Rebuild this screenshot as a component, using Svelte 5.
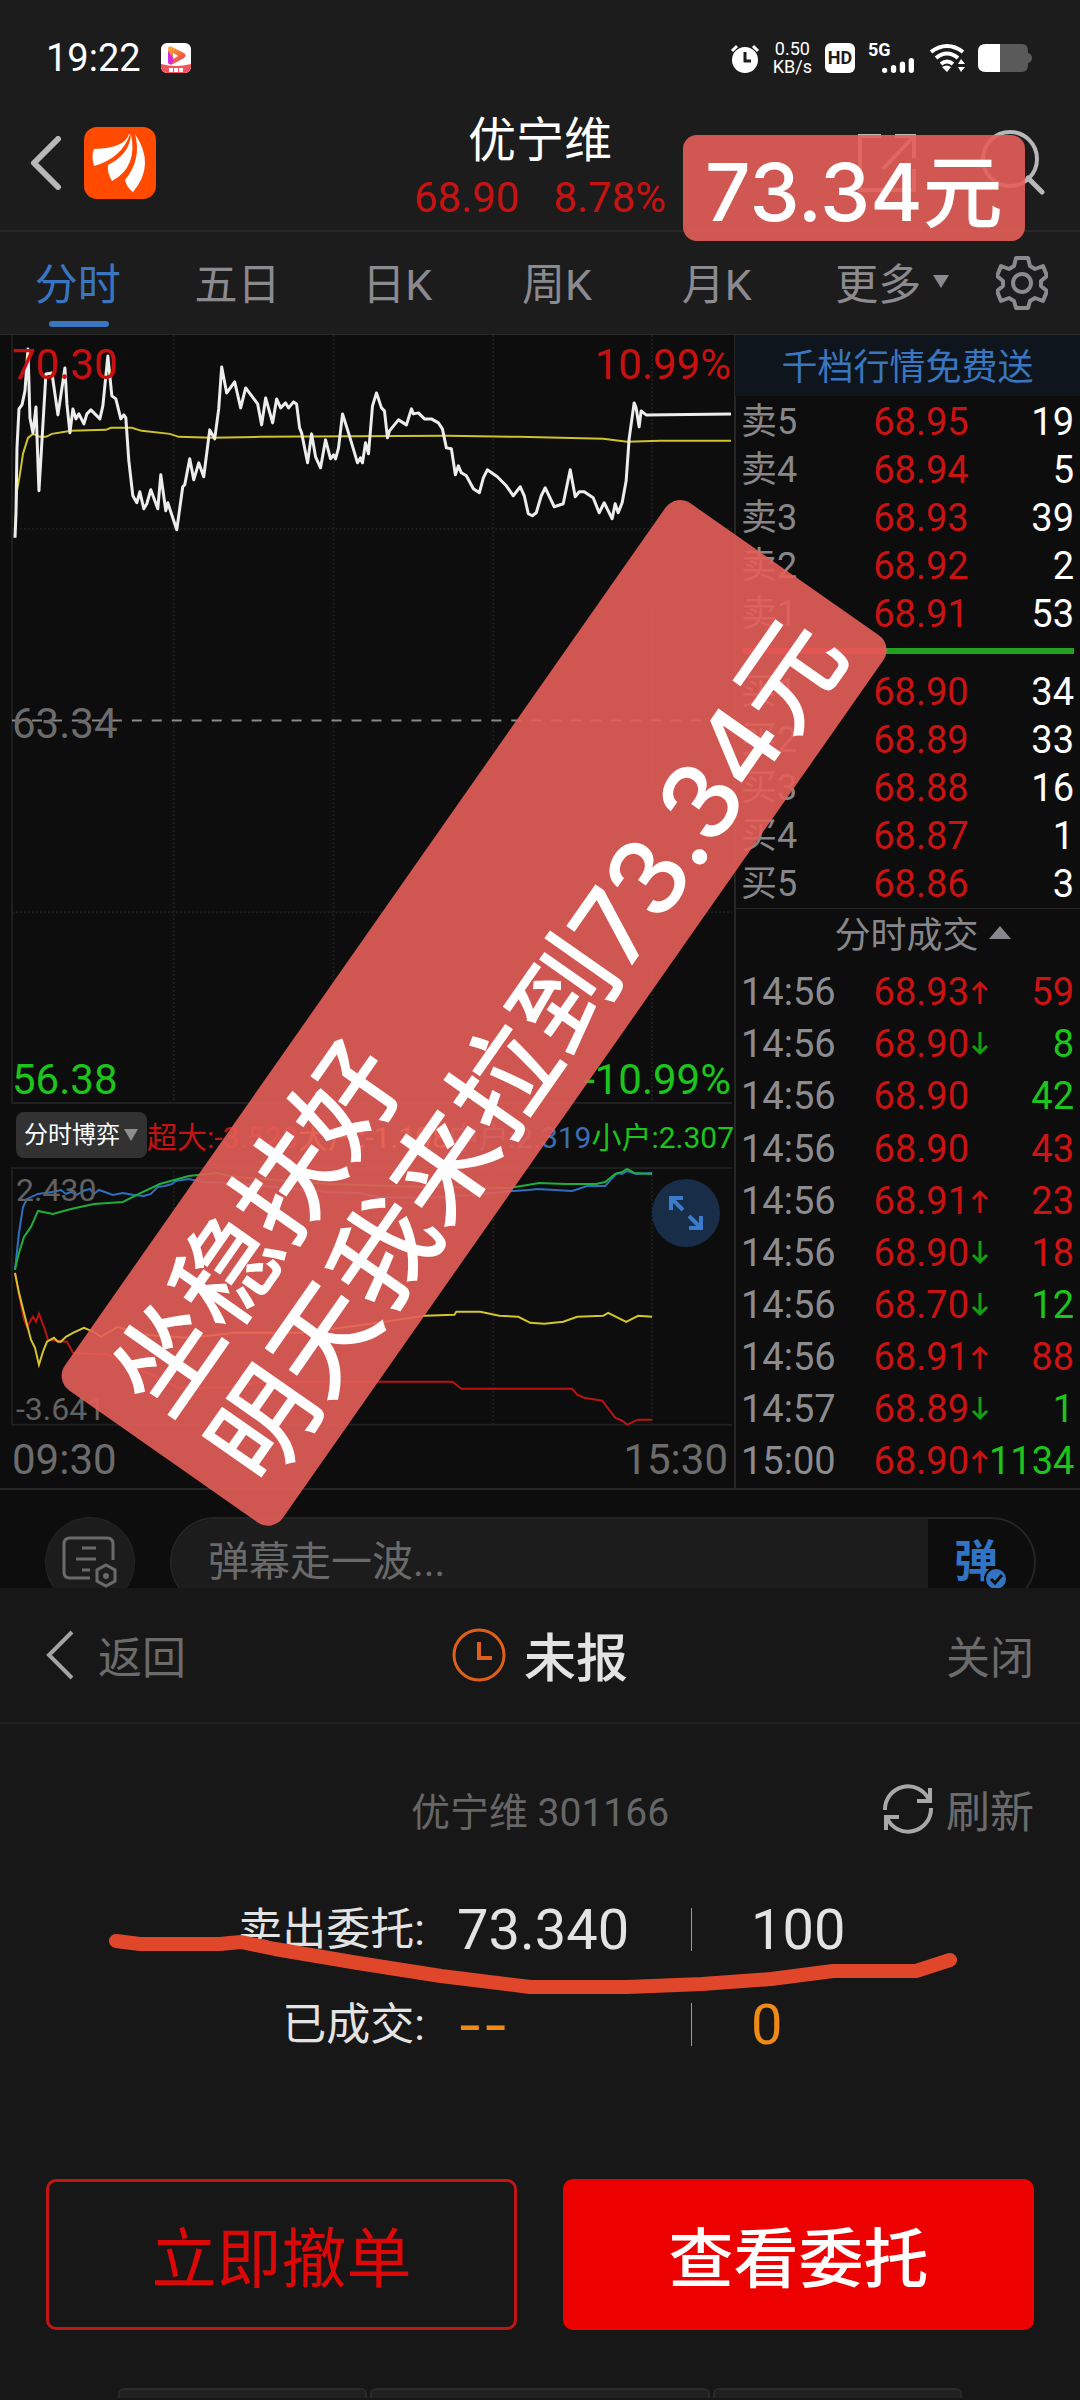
<script>
	let note = "";
	let period = "分时";
	let indicator = "分时博弈";

	const periods = ["分时", "五日", "日K", "周K", "月K"];

	const sells = [
		{ label: "卖5", price: "68.95", qty: 19 },
		{ label: "卖4", price: "68.94", qty: 5 },
		{ label: "卖3", price: "68.93", qty: 39 },
		{ label: "卖2", price: "68.92", qty: 2 },
		{ label: "卖1", price: "68.91", qty: 53 },
	];

	const buys = [
		{ label: "买1", price: "68.90", qty: 34 },
		{ label: "买2", price: "68.89", qty: 33 },
		{ label: "买3", price: "68.88", qty: 16 },
		{ label: "买4", price: "68.87", qty: 1 },
		{ label: "买5", price: "68.86", qty: 3 },
	];

	const trades = [
		{ time: "14:56", price: "68.93", dir: "up", qty: 59, side: "buy" },
		{ time: "14:56", price: "68.90", dir: "down", qty: 8, side: "sell" },
		{ time: "14:56", price: "68.90", dir: "", qty: 42, side: "sell" },
		{ time: "14:56", price: "68.90", dir: "", qty: 43, side: "buy" },
		{ time: "14:56", price: "68.91", dir: "up", qty: 23, side: "buy" },
		{ time: "14:56", price: "68.90", dir: "down", qty: 18, side: "buy" },
		{ time: "14:56", price: "68.70", dir: "down", qty: 12, side: "sell" },
		{ time: "14:56", price: "68.91", dir: "up", qty: 88, side: "buy" },
		{ time: "14:57", price: "68.89", dir: "down", qty: 1, side: "sell" },
		{ time: "15:00", price: "68.90", dir: "up", qty: 1134, side: "sell" },
	];

	const priceLine =
		"15,203 16,179 17,113 19,74 22,70 25,56 28,14 30,83 33,98 36,72 39,156 42,106 46,39 52,38 58,80 65,33 67,69 70,98 73,74 76,84 79,79 84,89 87,79 91,75 100,84 103,71 108,21 112,61 116,64 121,84 124,80 126,83 129,126 133,161 137,168 140,157 144,174 147,169 151,155 158,174 161,140 166,176 168,168 173,183 177,195 183,152 185,150 190,124 194,145 199,128 204,142 210,95 215,104 219,74 222,32 227,58 235,47 241,73 246,53 252,61 258,69 262,90 266,63 273,88 277,64 281,73 286,68 289,73 294,67 297,69 300,93 302,98 308,128 312,99 316,122 321,133 326,105 331,124 334,120 336,124 339,113 343,79 349,98 358,128 361,123 363,128 366,108 369,119 373,71 377,58 382,73 385,76 388,103 390,96 399,85 407,90 412,74 414,79 419,78 425,84 432,84 439,88 443,94 447,113 452,114 456,140 459,131 462,138 467,141 474,154 480,158 484,143 488,135 498,142 507,151 514,161 521,152 525,161 529,179 533,181 537,178 542,161 546,153 555,172 564,169 571,135 576,162 580,157 585,157 594,163 600,178 605,168 613,184 616,169 619,178 623,168 627,146 630,104 635,68 637,73 640,92 642,76 647,80 732,79";
	const averageLine =
		"15,196 17,156 20,139 23,119 28,103 33,99 40,102 46,102 52,99 71,96 106,95 111,93 132,93 142,96 170,99 179,102 212,103 260,102 448,101 519,102 604,104 628,107 661,106 732,106";

	const flows = [
		{
			color: "#2f6fc0",
			points: "15,103 19,66 23,40 27,32 38,27 52,25 61,23 66,27 71,25 77,28 83,24 90,22 94,27 99,23 105,25 113,28 123,26 134,28 144,29 151,27 158,20 165,19 172,17 176,14 189,12 203,15 227,16 330,25 359,26 378,30 425,31 472,28 514,24 529,23 538,22 573,24 588,19 606,19 613,11 618,6 623,7 628,4 637,7 653,6",
		},
		{
			color: "#1fae3c",
			points: "15,103 19,86 24,70 31,60 38,44 53,47 71,42 94,37 123,35 137,28 160,17 189,9 217,6 236,10 330,17 425,20 510,21 540,16 566,17 597,17 606,15 616,7 623,5 628,2 635,6 653,7",
		},
		{
			color: "#b81414",
			points: "15,106 19,128 24,153 27,160 33,150 36,155 39,147 45,163 48,173 67,175 73,186 109,188 179,221 227,221 264,215 453,215 462,222 573,222 578,228 585,231 603,234 616,251 623,254 628,258 639,253 653,253",
		},
		{
			color: "#d2c62c",
			points: "15,106 19,126 25,150 31,173 35,181 39,198 43,185 47,175 54,171 58,175 61,175 66,170 73,166 84,161 94,165 101,170 118,160 142,168 189,171 236,166 302,166 349,160 378,156 425,149 455,148 457,145 481,145 500,149 519,150 531,156 545,157 564,155 578,150 604,149 609,146 627,155 639,149 653,150",
		},
	];
</script>

<div class="app">
	<header>
		<div class="status">
			<span class="clock">19:22</span>
			<svg class="app-badge" viewBox="0 0 30 30" width="30" height="30">
				<defs>
					<linearGradient id="play" x1="0" y1="0" x2="1" y2="1">
						<stop offset="0" stop-color="#f9b233" />
						<stop offset="1" stop-color="#e8324f" />
					</linearGradient>
				</defs>
				<rect width="30" height="30" rx="6" fill="#fff" />
				<path d="M0 21q15 4 30 0v3a6 6 0 0 1-6 6H6a6 6 0 0 1-6-6z" fill="#f0545c" />
				<path d="M7 6q0-4 4-2l12 6q3 2 0 5l-11 6q-5 2-5-3z" fill="url(#play)" />
				<path d="M7 8l6 8-2 5q-4 1-4-3z" fill="#d42be0" />
				<path d="M12 10l5 3-5 3z" fill="#fff" />
				<path d="M8 27h14" stroke="#fff" stroke-width="4" stroke-dasharray="4 1" />
			</svg>
			<div class="status-icons">
				<svg viewBox="0 0 30 30" width="30" height="30">
					<circle cx="15" cy="17" r="13" fill="#fff" />
					<path d="M2 8l5-5M28 8l-5-5" stroke="#fff" stroke-width="3" />
					<path d="M15 9v9h6" fill="none" stroke="#1c1c1c" stroke-width="3" />
				</svg>
				<span class="speed">0.50<br />KB/s</span>
				<span class="hd">HD</span>
				<span class="cell">
					<span>5G</span>
					<svg viewBox="0 0 36 18" width="36" height="18">
						<path d="M3 15v0M13 15v-3M23 15v-7M33 15V4" stroke="#fff" stroke-width="6" stroke-linecap="round" />
					</svg>
				</span>
				<svg viewBox="0 0 36 30" width="36" height="30">
					<g fill="none" stroke="#fff" stroke-width="4">
						<path d="M2 9q16-12 32 0" />
						<path d="M7 15q11-9 22 0" />
						<path d="M12 21q6-5 12 0" />
					</g>
					<path d="M13 24q5-3 9 0l-4 5z" fill="#fff" />
					<path d="M32 16l4 5h-7zM32 29l4-5h-7z" fill="#fff" />
				</svg>
				<svg viewBox="0 0 54 28" width="54" height="28">
					<path d="M8 0h36q6 0 6 7v2q4 1 4 5t-4 5v2q0 7-6 7H8q-8 0-8-7V7q0-7 8-7z" fill="#5a5a5a" />
					<path d="M22 0v28H8q-8 0-8-7V7q0-7 8-7z" fill="#fff" />
				</svg>
			</div>
		</div>
		<div class="title-bar">
			<div class="side">
				<button class="icon" aria-label="返回">
					<svg viewBox="0 0 32 54" width="32" height="54">
						<path d="M28 3L4 27l24 24" fill="none" stroke="#b8b8b8" stroke-width="6" stroke-linecap="round" stroke-linejoin="round" />
					</svg>
				</button>
				<svg viewBox="0 0 72 72" width="72" height="72">
					<rect width="72" height="72" rx="13" fill="#ff4a00" />
					<path d="M45 7q-4 14-35 15-3 7 0 17 28-8 36-32z" fill="#fff" />
					<path d="M47 7q-1 20-23 31-1 8 4 16 26-14 19-47z" fill="#fff" />
					<path d="M51 7q7 25-10 46 2 8 8 12 23-27 2-58z" fill="#fff" />
				</svg>
			</div>
			<div class="stock">
				<h1>优宁维</h1>
				<p><span>68.90</span><span>8.78%</span></p>
			</div>
			<div class="side right">
				<button class="icon" aria-label="分享">
					<svg viewBox="0 0 60 60" width="60" height="60">
						<path d="M24 3H3v54h54V36M38 3h19v22M57 3L26 36" fill="none" stroke="#b8b8b8" stroke-width="4" />
					</svg>
				</button>
				<button class="icon" aria-label="搜索">
					<svg viewBox="0 0 64 66" width="64" height="66">
						<circle cx="29" cy="29" r="27" fill="none" stroke="#b8b8b8" stroke-width="4" />
						<path d="M47 48l14 14" stroke="#b8b8b8" stroke-width="5" stroke-linecap="round" />
					</svg>
				</button>
			</div>
			<div class="sticker small">73.34元</div>
		</div>
		<nav>
			{#each periods as item}
				<button class:active={period === item} on:click={() => (period = item)}>{item}</button>
			{/each}
			<button class="more">
				更多
				<svg viewBox="0 0 16 13" width="16" height="13"><path d="M0 0h16L8 13z" fill="currentColor" /></svg>
			</button>
			<button class="gear" aria-label="设置">
				<svg viewBox="0 0 52 54" width="52" height="54">
					<path
						d="M20 2h12l2 8 5 3 8-3 4 10-6 5v5l6 5-4 10-8-3-5 3-2 7H20l-2-7-5-3-8 3-4-10 6-5v-5l-6-5 4-10 8 3 5-3z"
						fill="none"
						stroke="currentColor"
						stroke-width="4"
						stroke-linejoin="round"
					/>
					<circle cx="26" cy="27" r="9" fill="none" stroke="currentColor" stroke-width="4" />
				</svg>
			</button>
		</nav>
	</header>

	<main>
		<section class="charts">
			<div class="chart">
				<svg viewBox="0 0 735 770">
					<g stroke="#1f1f1f" stroke-width="2">
						<path d="M12 0V769H733" fill="none" />
						<path d="M174 0V768M334 0V768M494 0V768M653 0V768M12 194H733M12 578H733" stroke-dasharray="2 2" />
					</g>
					<path d="M12 386H733" stroke="#8a8a8a" stroke-width="2" stroke-dasharray="10 10" />
					<polyline points={averageLine} fill="none" stroke="#cfc32b" stroke-width="2" />
					<polyline points={priceLine} fill="none" stroke="#ededed" stroke-width="3" stroke-linejoin="round" />
				</svg>
				<span class="axis up tl">70.30</span>
				<span class="axis up tr">10.99%</span>
				<span class="axis mid">63.34</span>
				<span class="axis down bl">56.38</span>
				<span class="axis down br">-10.99%</span>
			</div>
			<div class="legend">
				<div class="picker">
					<select bind:value={indicator} aria-label="指标">
						<option>分时博弈</option>
					</select>
					<svg viewBox="0 0 14 12" width="14" height="12"><path d="M0 0h14L7 12z" fill="#8e8d92" /></svg>
				</div>
				<p>
					<span class="huge">超大:-3.528</span><span class="large">大户:-1.108</span><span class="medium"
						>中户:2.319</span
					><span class="little">小户:2.307</span>
				</p>
			</div>
			<div class="chart">
				<svg viewBox="0 0 735 259">
					<g stroke="#1f1f1f" stroke-width="2">
						<path d="M12 258V1H733M12 258H733" fill="none" />
						<path d="M174 0V258M334 0V258M494 0V258M653 0V258" stroke-dasharray="2 2" />
					</g>
					{#each flows as flow}
						<polyline points={flow.points} fill="none" stroke={flow.color} stroke-width="2" />
					{/each}
				</svg>
				<span class="scale top">2.430</span>
				<span class="scale bottom">-3.641</span>
				<button class="expand" aria-label="放大">
					<svg viewBox="0 0 34 34" width="34" height="34">
						<path d="M14 2H2v12M2 2l12 12M20 32h12V20M32 32L20 20" fill="none" stroke="#3a7ccb" stroke-width="4" />
					</svg>
				</button>
			</div>
			<div class="times"><span>09:30</span><span>15:30</span></div>
		</section>

		<section class="book">
			<a class="promo" href="#depth">千档行情免费送</a>
			<table>
				<tbody>
					{#each sells as row}
						<tr>
							<th scope="row">{row.label}</th>
							<td class="price">{row.price}</td>
							<td class="qty">{row.qty}</td>
						</tr>
					{/each}
				</tbody>
			</table>
			<div class="ratio"></div>
			<table>
				<tbody>
					{#each buys as row}
						<tr>
							<th scope="row">{row.label}</th>
							<td class="price">{row.price}</td>
							<td class="qty">{row.qty}</td>
						</tr>
					{/each}
				</tbody>
			</table>
			<button class="ticks">
				分时成交
				<svg viewBox="0 0 22 13" width="22" height="13"><path d="M0 13h22L11 0z" fill="currentColor" /></svg>
			</button>
			<ul>
				{#each trades as trade}
					<li>
						<span class="time">{trade.time}</span>
						<span class="price">{trade.price}</span>
						<span class="arrow">
							{#if trade.dir === "up"}
								<svg viewBox="0 0 18 24" width="18" height="24">
									<path d="M9 24V3M2 10l7-7 7 7" fill="none" stroke="#cc1111" stroke-width="3" />
								</svg>
							{:else if trade.dir === "down"}
								<svg viewBox="0 0 18 24" width="18" height="24">
									<path d="M9 0v21M2 14l7 7 7-7" fill="none" stroke="#12a012" stroke-width="3" />
								</svg>
							{/if}
						</span>
						<span class="qty {trade.side}">{trade.qty}</span>
					</li>
				{/each}
			</ul>
		</section>

		<div class="sticker big">坐稳扶好<br />明天我来拉到73.34元</div>
	</main>

	<div class="barrage">
		<button class="round" aria-label="弹幕设置">
			<svg viewBox="0 0 56 52" width="56" height="52">
				<g fill="none" stroke="#6a6a6a" stroke-width="3">
					<path d="M28 42H8q-6 0-6-6V8q0-6 6-6h37q6 0 6 6v16" />
					<path d="M20 12h14M14 23h20M20 34h8" />
					<path d="M44 29l9 5v11l-9 5-9-5V34z" />
				</g>
				<circle cx="44" cy="40" r="3" fill="#6a6a6a" />
			</svg>
		</button>
		<div class="pill">
			<input type="text" placeholder="弹幕走一波..." aria-label="弹幕" bind:value={note} />
			<button class="send" aria-label="弹幕开关">
				<span>弹</span>
				<svg viewBox="0 0 24 24" width="24" height="24">
					<circle cx="12" cy="12" r="11" fill="#3274c4" stroke="#0d0d0d" stroke-width="2" />
					<path d="M7 12l4 4 7-8" fill="none" stroke="#0d0d0d" stroke-width="3" />
				</svg>
			</button>
		</div>
	</div>

	<section class="sheet">
		<div class="sheet-head">
			<button class="link">
				<svg viewBox="0 0 28 50" width="28" height="50">
					<path d="M26 2L3 25l23 23" fill="none" stroke="#a3a3a3" stroke-width="4" />
				</svg>
				返回
			</button>
			<h2>
				<svg viewBox="0 0 54 54" width="54" height="54">
					<circle cx="27" cy="27" r="25" fill="none" stroke="#dd5f1a" stroke-width="3" />
					<path d="M27 14v16h13" fill="none" stroke="#dd5f1a" stroke-width="4" />
				</svg>
				未报
			</h2>
			<button class="link end">关闭</button>
		</div>
		<div class="name-row">
			<span class="code">优宁维 301166</span>
			<button class="link end">
				<svg viewBox="0 0 52 52" width="52" height="52">
					<g fill="none" stroke="#a8a8a8" stroke-width="4">
						<path d="M3 27A23 23 0 0 1 47 17M49 25A23 23 0 0 1 5 35" />
						<path d="M48 5v13H35M4 47V34h13" />
					</g>
				</svg>
				刷新
			</button>
		</div>
		<dl>
			<div>
				<dt>卖出委托:</dt>
				<dd class="amount">73.340</dd>
				<dd class="count">100</dd>
			</div>
			<div class="filled">
				<dt>已成交:</dt>
				<dd class="amount none">--</dd>
				<dd class="count">0</dd>
			</div>
			<svg class="scribble" viewBox="0 0 1080 200">
				<path
					d="M116 58L140 61H220L241 59L275 66L358 80L441 93L530 104H627L702 101L771 96L833 88H916L950 77"
					fill="none"
					stroke="#e0472a"
					stroke-width="14"
					stroke-linecap="round"
					stroke-linejoin="round"
				/>
			</svg>
		</dl>
		<div class="actions">
			<button class="cancel">立即撤单</button>
			<button class="view">查看委托</button>
		</div>
		<div class="dock"><i></i><i></i><i></i></div>
	</section>
</div>

<style>
	:global(body) {
		background: #171717;
	}
	.app {
		font-family: Roboto, "Noto Sans CJK SC", sans-serif;
		background: #0d0d0d;
		color: #fff;
		overflow: hidden;
	}
	button,
	input,
	select {
		font: inherit;
		color: inherit;
		background: none;
		border: 0;
		padding: 0;
		margin: 0;
	}
	button {
		cursor: pointer;
	}
	svg {
		display: block;
	}
	h1,
	h2,
	p,
	dl,
	dd,
	ul {
		margin: 0;
		padding: 0;
		font-weight: 400;
	}
	header {
		background: #1c1c1c;
	}
	.status {
		display: flex;
		align-items: center;
		height: 116px;
		padding: 0 48px 0 46px;
	}
	.clock {
		font-size: 38px;
		margin-right: 20px;
	}
	.status-icons {
		display: flex;
		align-items: center;
		gap: 13px;
		margin-left: auto;
	}
	.speed {
		font-size: 18px;
		line-height: 18px;
		text-align: center;
	}
	.hd {
		width: 30px;
		background: #fff;
		color: #1c1c1c;
		border-radius: 6px;
		font-size: 18px;
		line-height: 30px;
		font-weight: 700;
		text-align: center;
	}
	.cell {
		display: flex;
		flex-direction: column;
		width: 48px;
		height: 30px;
	}
	.cell span {
		font-size: 18px;
		line-height: 14px;
		font-weight: 700;
	}
	.cell svg {
		align-self: flex-end;
	}
	.title-bar {
		display: grid;
		grid-template-columns: 1fr auto 1fr;
		grid-template-rows: 114px;
		align-items: center;
		padding: 0 35px 0 30px;
		position: relative;
		border-bottom: 2px solid #262626;
	}
	.side {
		display: flex;
		align-items: center;
		gap: 22px;
		margin-bottom: 20px;
	}
	.side.right {
		justify-content: flex-end;
		gap: 64px;
	}
	.stock {
		align-self: start;
		padding-left: 5px;
		text-align: center;
	}
	h1 {
		font-size: 48px;
		line-height: 50px;
	}
	.stock p {
		display: flex;
		gap: 34px;
		font-size: 42px;
		line-height: 64px;
		color: #c51313;
	}
	.sticker {
		position: absolute;
		background: rgba(229, 94, 89, 0.9);
		font-family: Inter, "Noto Sans CJK SC", sans-serif;
		font-weight: 500;
		white-space: nowrap;
		z-index: 2;
	}
	.sticker.small {
		left: 683px;
		top: 19px;
		padding: 8px 22px 0;
		border-radius: 14px;
		font-size: 80px;
		line-height: 98px;
	}
	.sticker.big {
		left: 474px;
		top: 678px;
		padding: 20px 31px 10px;
		border-radius: 18px;
		font-size: 105px;
		line-height: 118px;
		transform: translate(-50%, -50%) rotate(-55deg);
	}
	nav {
		display: flex;
		height: 102px;
		padding-right: 6px;
		border-bottom: 1px solid #2a2a2a;
		color: #8b8a8f;
		font-size: 43px;
	}
	nav button {
		flex: 3 1 0;
		position: relative;
		padding: 0 4px 4px 0;
	}
	nav .active {
		color: #3a76c0;
	}
	nav .active::after {
		content: "";
		position: absolute;
		left: 50%;
		bottom: 7px;
		width: 60px;
		height: 6px;
		margin-left: -31px;
		border-radius: 3px;
		background: currentColor;
	}
	nav .more {
		display: flex;
		align-items: center;
		justify-content: center;
		gap: 12px;
		padding: 0 0 4px 16px;
	}
	nav .gear {
		flex: 2 1 0;
		display: flex;
		align-items: center;
		justify-content: center;
		padding: 0;
	}
	main {
		display: grid;
		grid-template-columns: minmax(0, 49fr) minmax(0, 23fr);
		position: relative;
		border-bottom: 2px solid #262626;
	}
	.charts {
		border-right: 2px solid #262626;
		margin-right: -1px;
	}
	.chart {
		position: relative;
	}
	.chart > svg {
		width: 100%;
	}
	.axis,
	.times {
		font-size: 42px;
		line-height: 48px;
	}
	.axis {
		position: absolute;
		left: 12px;
	}
	.axis.tl,
	.axis.tr {
		top: 6px;
	}
	.axis.tr,
	.axis.br {
		left: auto;
		right: 3px;
	}
	.axis.bl,
	.axis.br {
		bottom: 0;
	}
	.axis.mid {
		top: 365px;
		color: #6c6c6c;
	}
	.up {
		color: #c91010;
	}
	.down {
		color: #1cc41c;
	}
	.legend {
		display: flex;
		align-items: center;
		justify-content: space-between;
		height: 63px;
		padding: 0 3px 0 16px;
		white-space: nowrap;
	}
	.picker {
		position: relative;
	}
	.picker select {
		appearance: none;
		width: 131px;
		height: 46px;
		padding-left: 8px;
		border-radius: 8px;
		background: #323232;
		font-size: 24px;
	}
	.picker svg {
		position: absolute;
		right: 9px;
		top: 17px;
		pointer-events: none;
	}
	.legend p {
		font-size: 30px;
	}
	.huge {
		color: #c51313;
	}
	.large {
		color: #e09a2c;
	}
	.medium {
		color: #3a6fb4;
	}
	.little {
		color: #1cc41c;
	}
	.scale {
		position: absolute;
		left: 16px;
		font-size: 32px;
		line-height: 40px;
		color: #626262;
	}
	.scale.top {
		top: 3px;
	}
	.scale.bottom {
		bottom: -3px;
	}
	.expand {
		position: absolute;
		right: 14px;
		top: 12px;
		width: 68px;
		height: 68px;
		border-radius: 50%;
		background: #182d48;
		display: flex;
		align-items: center;
		justify-content: center;
	}
	.times {
		display: flex;
		justify-content: space-between;
		padding: 10px 6px 4px 12px;
		color: #6c6c6c;
	}
	.book {
		display: flex;
		flex-direction: column;
		font-size: 38px;
		line-height: 48px;
	}
	.promo {
		background: #0f151c;
		color: #3a76c0;
		font-size: 36px;
		line-height: 56px;
		padding: 5px 0 0;
		margin-bottom: 2px;
		text-align: center;
		text-decoration: none;
	}
	table {
		border-collapse: collapse;
		table-layout: fixed;
		width: 100%;
	}
	th,
	td {
		padding: 0;
		height: 48px;
	}
	th {
		width: 30%;
		padding-left: 6px;
		font-size: 36px;
		font-weight: 400;
		text-align: left;
		color: #87878b;
	}
	td {
		text-align: right;
	}
	td.price {
		width: 36%;
	}
	.price {
		color: #c91212;
	}
	.qty {
		padding-right: 6px;
	}
	.ratio {
		height: 6px;
		margin: 10px 6px 14px 7px;
		background: linear-gradient(to right, #c91212 43%, #22a022 43%);
	}
	.ticks {
		display: flex;
		align-items: center;
		justify-content: center;
		gap: 10px;
		height: 54px;
		margin-bottom: 4px;
		padding-left: 30px;
		border-top: 1px solid #262626;
		font-size: 36px;
		color: #87878b;
	}
	.ticks svg {
		margin-bottom: 6px;
	}
	ul {
		flex: 1;
		display: flex;
		flex-direction: column;
		list-style: none;
	}
	li {
		flex: 1;
		display: grid;
		grid-template-columns: 104px 124px 20px minmax(0, 1fr);
		align-items: center;
		padding-left: 6px;
	}
	li .price,
	li .qty {
		text-align: right;
	}
	li .arrow {
		padding-left: 2px;
	}
	.time {
		color: #8b8b90;
	}
	.buy {
		color: #cf1313;
	}
	.sell {
		color: #1cc41c;
	}
	.barrage {
		display: flex;
		align-items: flex-start;
		gap: 35px;
		height: 71px;
		padding: 27px 44px 0 45px;
		overflow: hidden;
	}
	.round {
		flex: none;
		width: 90px;
		height: 90px;
		border-radius: 50%;
		border: 1px solid #262626;
		background: #1c1c1c;
		display: flex;
		align-items: center;
		justify-content: center;
	}
	.pill {
		flex: 1;
		display: flex;
		height: 90px;
		border: 2px solid #242424;
		border-radius: 45px;
		box-sizing: border-box;
		overflow: hidden;
	}
	.pill input {
		flex: 1;
		min-width: 0;
		padding-left: 36px;
		background: #1c1c1c;
		font-size: 41px;
	}
	.pill input::placeholder {
		color: #6a6a6a;
		opacity: 1;
	}
	.send {
		position: relative;
		width: 106px;
		padding-right: 10px;
		font-size: 44px;
		line-height: 44px;
		font-weight: 700;
		color: #3274c4;
	}
	.send span {
		display: block;
	}
	.send svg {
		position: absolute;
		right: 26px;
		bottom: 14px;
	}
	.sheet {
		position: relative;
		background: #171717;
	}
	.sheet-head,
	.name-row {
		display: grid;
		grid-template-columns: 1fr auto 1fr;
		align-items: center;
		padding: 0 46px;
	}
	.sheet-head {
		height: 134px;
		border-bottom: 2px solid #222;
	}
	.link {
		display: flex;
		align-items: center;
		gap: 24px;
		font-size: 44px;
		color: #6b6b6b;
	}
	.end {
		justify-self: end;
		gap: 12px;
	}
	h2 {
		display: flex;
		align-items: center;
		gap: 18px;
		font-size: 52px;
		font-weight: 500;
		color: #e3e3e3;
	}
	.name-row {
		height: 148px;
		padding-top: 11px;
	}
	.code {
		grid-column: 2;
		font-size: 39px;
		color: #666;
	}
	dl {
		position: relative;
	}
	dl > div {
		display: grid;
		grid-template-columns: 425px 266px 1fr;
		align-items: center;
		height: 95px;
		color: #e3e3e3;
		font-size: 56px;
		line-height: 64px;
	}
	dt {
		font-size: 44px;
		text-align: right;
	}
	.amount {
		padding-left: 32px;
	}
	.none {
		font-family: Inter, sans-serif;
	}
	.count {
		padding-left: 60px;
		position: relative;
	}
	.count::before {
		content: "";
		position: absolute;
		left: 0;
		top: 10px;
		width: 1px;
		height: 43px;
		background: #9a9a9a;
	}
	.filled dd {
		color: #ef8a17;
	}
	.scribble {
		position: absolute;
		left: 0;
		top: 0;
		width: 100%;
	}
	.actions {
		display: grid;
		grid-template-columns: 1fr 1fr;
		gap: 46px;
		padding: 106px 46px 58px;
	}
	.actions button {
		height: 151px;
		border-radius: 10px;
		font-size: 65px;
	}
	.actions .cancel {
		border: 3px solid #c31515;
		color: #dc0808;
	}
	.actions .view {
		background: #ec0000;
		font-weight: 500;
	}
	.dock {
		display: grid;
		grid-template-columns: 25fr 34fr 25fr;
		gap: 3px;
		height: 10px;
		padding: 0 118px;
		overflow: hidden;
	}
	.dock i {
		height: 24px;
		border: 2px solid #2a2a2a;
		border-radius: 6px;
		background: #202020;
	}
</style>
